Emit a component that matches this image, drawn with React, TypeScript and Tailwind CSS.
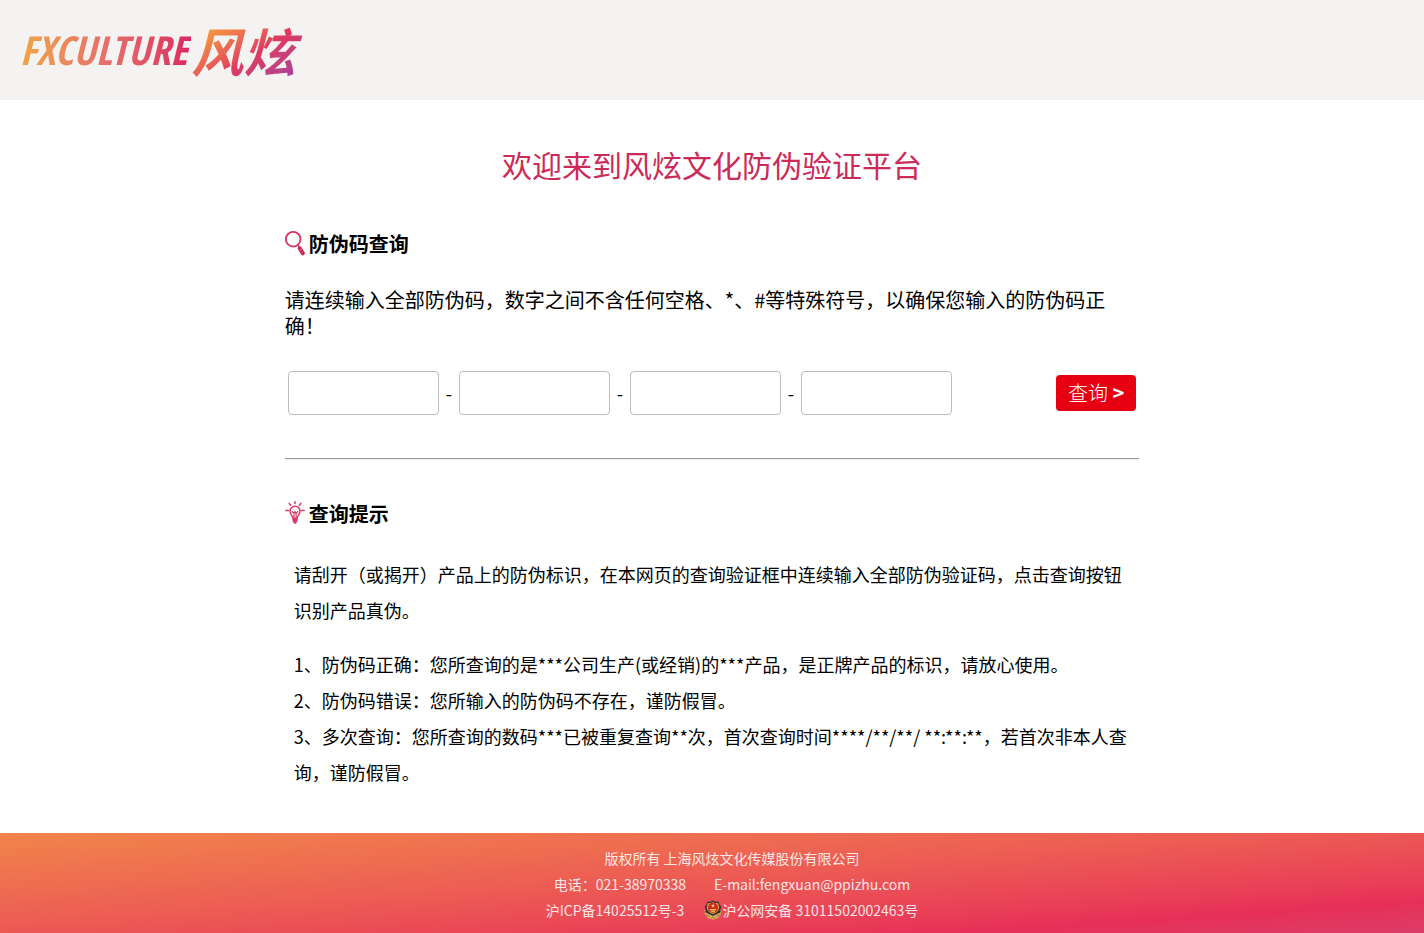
import React, { useRef, useState } from 'react';

const GROUP_COUNT = 4;
const GROUP_LENGTH = 4;

const RESULT_TIPS = [
  '1、防伪码正确：您所查询的是***公司生产(或经销)的***产品，是正牌产品的标识，请放心使用。',
  '2、防伪码错误：您所输入的防伪码不存在，谨防假冒。',
  '3、多次查询：您所查询的数码***已被重复查询**次，首次查询时间****/**/**/ **:**:**，若首次非本人查询，谨防假冒。',
];

function Logo() {
  return (
    <a href="#" aria-label="FXCULTURE风炫" className="flex h-12 items-center whitespace-nowrap italic">
      <span className="bg-linear-to-r from-[#f0a544] via-[#e5706b] to-[#dc2560] bg-clip-text pr-1 font-['Noto_Sans_ExtraCondensed','Open_Sans_Condensed','Roboto_Condensed',sans-serif] text-[40px] font-medium text-transparent">
        FXCULTURE
      </span>
      <span className="bg-linear-to-br from-[#f6a32f] from-15% via-[#e03a5e] via-55% to-[#a03fa0] to-90% bg-clip-text pr-3 text-[52px] font-bold text-transparent">
        风炫
      </span>
    </a>
  );
}

function SearchIcon() {
  return (
    <svg className="h-[26px] w-5 shrink-0" viewBox="0 1 20 26" fill="none" aria-hidden="true">
      <circle cx="8.2" cy="9.2" r="7.3" stroke="#d63a66" strokeWidth="1.9" />
      <path d="M12.6 15l1.8 2.400" stroke="#d63a66" strokeWidth="1.6" />
      <path d="M14.800 18.400l3 5" stroke="#d02a5a" strokeWidth="4" strokeLinecap="round" />
      <path d="M14.6 20.400l2.6-1.8" stroke="#eb8fa9" strokeWidth=".7" />
    </svg>
  );
}

function BulbIcon() {
  return (
    <svg
      className="h-[26px] w-5 shrink-0"
      viewBox="0 1 20 26"
      fill="none"
      stroke="#d63a66"
      strokeWidth="1.5"
      strokeLinecap="round"
      aria-hidden="true"
    >
      <path d="M10 1.8v1.8M4.2 3.4l1.4 1.9M15.8 3.4l-1.4 1.9M.8 10.6h2.8M16.4 10.6h2.8" />
      <path d="M8 18.6c0-2.6-3-4-3-7.4a5 5 0 0 1 10 0c0 3.4-3 4.8-3 7.4z" />
      <path d="M7.4 11.6l1.5 2.2 1.1-2.2 1.1 2.2 1.5-2.2M8.9 13.8v4M11.1 13.8v4" strokeWidth="1.2" />
      <path d="M8 19.8h4M8.3 21.4h3.4M9.4 22.9h1.2" strokeWidth="1.6" />
    </svg>
  );
}

function PoliceBadge() {
  return (
    <svg className="h-5 w-[18px] shrink-0" viewBox="0 0 18 20" aria-hidden="true">
      <path d="M.6 10c0 6 3.4 9.5 8.4 9.5s8.4-3.5 8.4-9.5z" fill="#d9b062" />
      <path d="M2 15l4 1.5M16 15l-4 1.5M6.5 19l2.5-2 2.5 2" stroke="#8a6428" strokeWidth=".8" fill="none" />
      <path d="M9 .4l2.4 1.4 3-.3 1 2.7 1.9 2.3-.9 2.7.3 3-3 1.6L9 16l-4.7-2.200-3-1.6.3-3-.9-2.7 1.9-2.3 1-2.7 3 .3z" fill="#3b302f" />
      <path d="M9 2c2 1.3 3.6 1.2 5 1 0 1 1.2 2 1.2 4.3 0 3.3-2.6 5.3-6.2 7-3.6-1.7-6.2-3.7-6.2-7C2.8 5 4 4 4 3c1.4.2 3 .3 5-1z" fill="#c9a04e" />
      <circle cx="9" cy="7.8" r="5" fill="#d8231f" />
      <path d="M9 3.8l.6 1.2 1.3.2-1 .9.3 1.3L9 6.8l-1.2.6.3-1.3-1-.9 1.3-.2zM5.8 9h6.4v1.2H5.8zM7 10.8h4v1H7z" fill="#f5d263" />
    </svg>
  );
}

function SectionTitle({ icon, children }: { icon: React.ReactNode; children: React.ReactNode }) {
  return (
    <h2 className="flex items-center gap-1 text-xl leading-7 font-bold">
      {icon}
      {children}
    </h2>
  );
}

function CodeForm() {
  const [groups, setGroups] = useState<string[]>(Array(GROUP_COUNT).fill(''));
  const inputs = useRef<(HTMLInputElement | null)[]>([]);

  const handleChange = (index: number, value: string) => {
    const digits = value.replace(/\D/g, '').slice(0, GROUP_LENGTH);
    setGroups((prev) => prev.map((g, i) => (i === index ? digits : g)));
    // jump to the next box once this one is full
    if (digits.length === GROUP_LENGTH) {
      inputs.current[index + 1]?.focus();
    }
  };

  return (
    <form
      className="mt-8 flex items-center justify-between gap-4 px-[3px]"
      onSubmit={(e) => e.preventDefault()}
    >
      <div className="flex items-center">
        {groups.map((group, i) => (
          <React.Fragment key={i}>
            {i > 0 && <span className="w-5 text-center text-lg">-</span>}
            <input
              ref={(el) => {
                inputs.current[i] = el;
              }}
              type="text"
              inputMode="numeric"
              aria-label={`防伪码第${i + 1}组`}
              value={group}
              onChange={(e) => handleChange(i, e.target.value)}
              className="h-11 w-[151px] min-w-0 rounded border border-[#bdbdbd] bg-white px-3 text-xl outline-none focus:border-[#e60012]"
            />
          </React.Fragment>
        ))}
      </div>
      <button
        type="submit"
        className="h-9 w-20 shrink-0 rounded bg-[#e60012] text-xl leading-9 font-light text-white"
      >
        查询 <span className="font-bold">&gt;</span>
      </button>
    </form>
  );
}

export default function App() {
  return (
    <div className="flex min-h-screen flex-col bg-white font-['Noto_Sans_CJK_SC',sans-serif] text-black">
      <header className="flex h-[100px] items-center bg-[#f4f3f1] px-5">
        <Logo />
      </header>

      <main className="mx-auto w-3/5 flex-1">
        <h1 className="mt-[42px] text-center text-3xl leading-11 text-[#cc2a57]">欢迎来到风炫文化防伪验证平台</h1>

        <section className="mt-11">
          <SectionTitle icon={<SearchIcon />}>防伪码查询</SectionTitle>
          <p className="mt-[29px] text-xl leading-[26px]">
            请连续输入全部防伪码，数字之间不含任何空格、*、#等特殊符号，以确保您输入的防伪码正确！
          </p>
          <CodeForm />
        </section>

        <hr className="mt-[43px] border-y border-t-[#999] border-b-[#eee]" />

        <section className="mt-10">
          <SectionTitle icon={<BulbIcon />}>查询提示</SectionTitle>
          <div className="mt-7 px-[9px] text-lg leading-9">
            <p>
              请刮开（或揭开）产品上的防伪标识，在本网页的查询验证框中连续输入全部防伪验证码，点击查询按钮识别产品真伪。
            </p>
            <div className="mt-[18px]">
              {RESULT_TIPS.map((tip) => (
                <p key={tip}>{tip}</p>
              ))}
            </div>
          </div>
        </section>
      </main>

      <footer className="mt-10 flex h-[100px] flex-col items-center bg-linear-to-br from-[#f1844a] via-[#e72f58] via-84% to-[#db3c67] pt-3 pl-10 text-sm leading-[26px] text-white/85">
        <p>版权所有 上海风炫文化传媒股份有限公司</p>
        <p className="flex gap-7">
          <span>电话：021-38970338</span>
          <span>E-mail:fengxuan@ppizhu.com</span>
        </p>
        <p className="flex gap-5">
          <a href="#">沪ICP备14025512号-3</a>
          <a href="#" className="flex items-center">
            <PoliceBadge />
            沪公网安备 31011502002463号
          </a>
        </p>
      </footer>
    </div>
  );
}
